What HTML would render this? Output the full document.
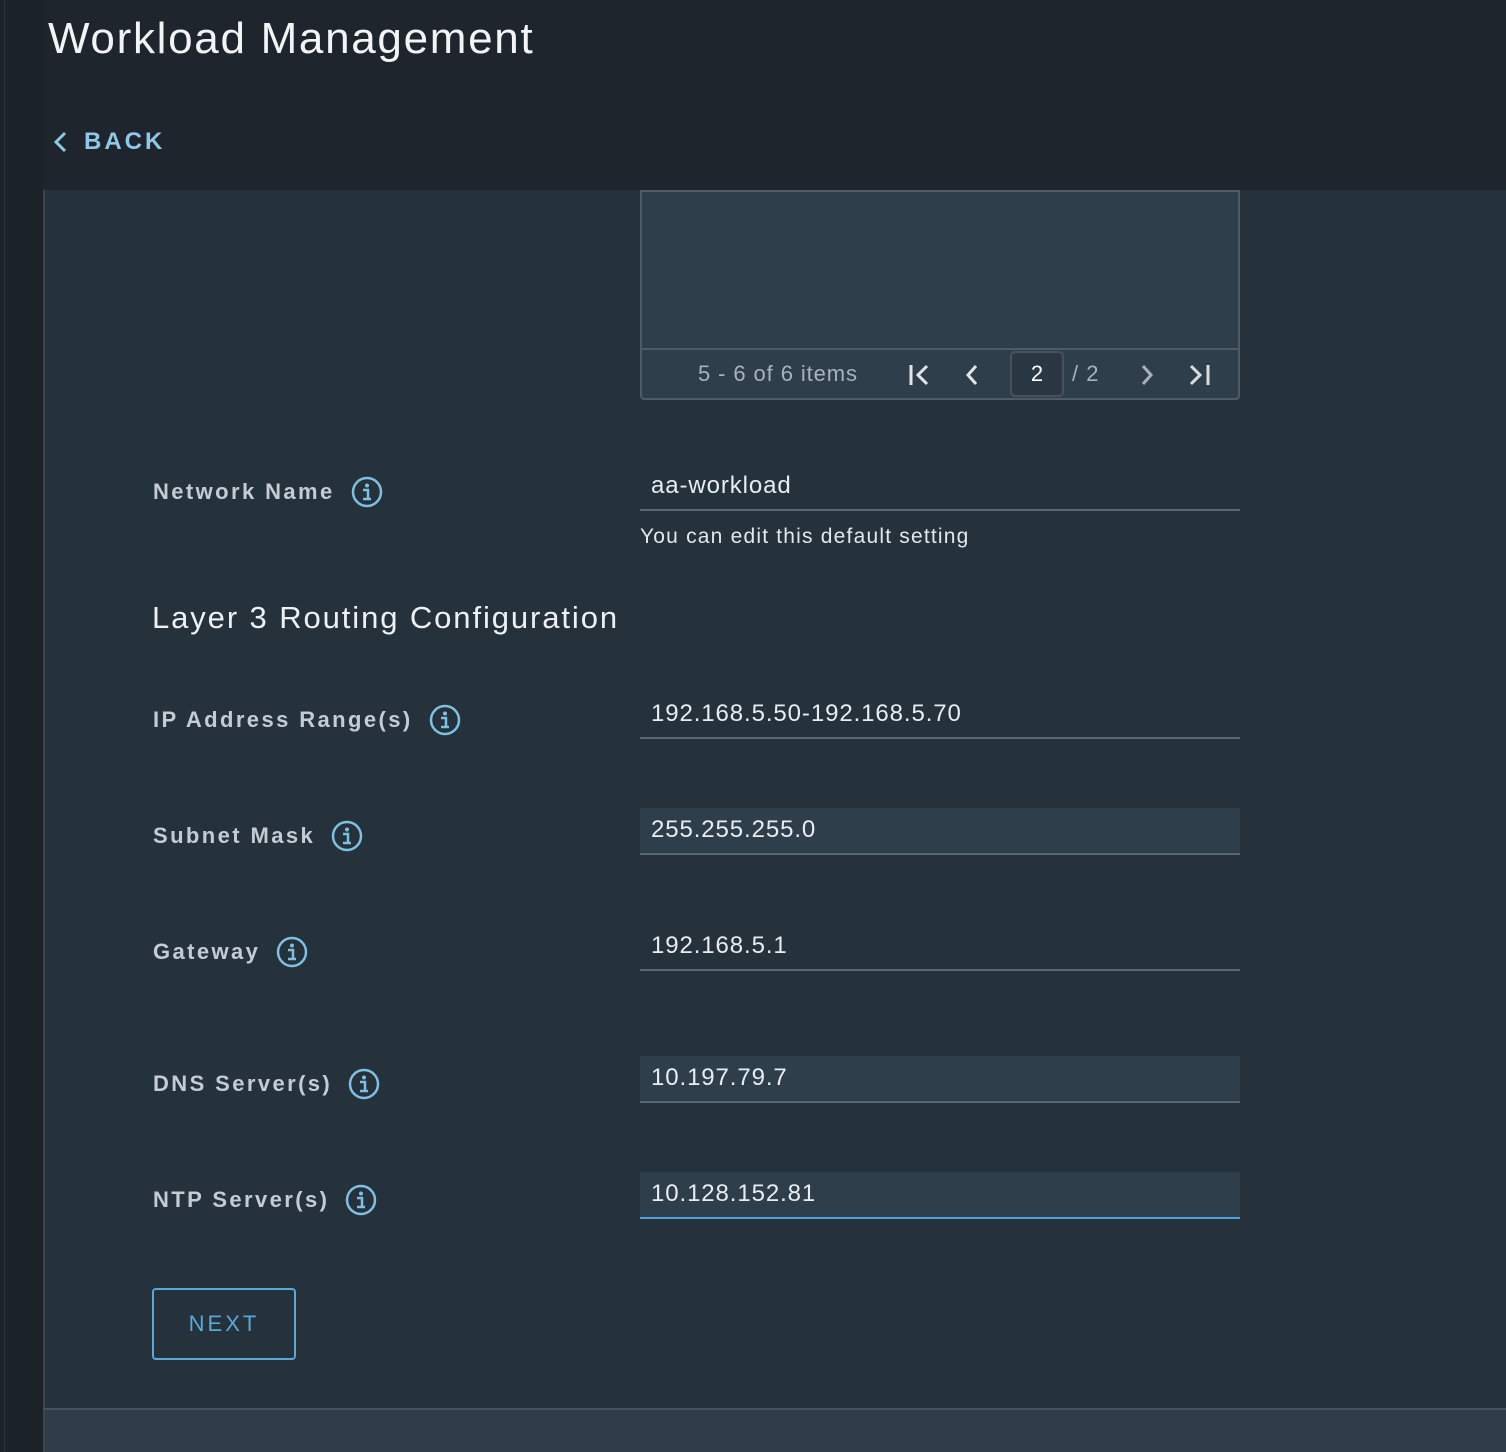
<!DOCTYPE html>
<html><head><meta charset="utf-8"><style>
*{margin:0;padding:0;box-sizing:border-box}
body{width:1506px;height:1452px;background:#1e252d;font-family:"Liberation Sans",sans-serif;position:relative;overflow:hidden}
.a{position:absolute}
.lbl{position:absolute;left:153px;font-size:22px;font-weight:bold;color:#c3ccd5;display:flex;align-items:center;letter-spacing:2.4px}
.ic{width:32px;height:32px;margin-left:16px}
.inp{position:absolute;left:640px;width:600px;height:47px;border-bottom:2px solid #5c6670;color:#e8edf1;font-size:24px;padding:0 0 0 11px;line-height:44px;letter-spacing:0.9px}
.inp.f{background:#2e3e4b}
</style></head><body>
<div class="a" style="left:0;top:0;width:43px;height:1452px;background:#1b2228"></div>
<div class="a" style="left:4px;top:0;width:1px;height:1452px;background:#2b3540"></div>
<div class="a" style="left:48px;top:14px;font-size:44px;color:#f2f4f6;letter-spacing:1.7px">Workload Management</div>
<div class="a" style="left:52px;top:128px;font-size:24px;font-weight:bold;color:#8fc7e6;letter-spacing:3px;display:flex;align-items:center">
<svg width="18" height="26" viewBox="0 0 18 26"><path d="M13 4 L4 13 L13 22" stroke="#8fc7e6" stroke-width="3" fill="none"/></svg>
<span style="margin-left:14px">BACK</span></div>
<div class="a" style="left:43px;top:190px;width:1463px;height:1218px;background:#25313b;border-left:2px solid #3a4550"></div>
<div class="a" style="left:43px;top:1408px;width:1463px;height:44px;background:#2e3d49;border-top:2px solid #46535f;border-left:2px solid #3a4550"></div>
<div class="a" style="left:640px;top:190px;width:600px;height:210px;background:#2f3e4b;border:2px solid #4d5b67;border-radius:0 0 4px 4px"></div>
<div class="a" style="left:640px;top:348px;width:600px;height:2px;background:#4d5b67"></div>
<div class="a" style="left:698px;top:361px;font-size:22px;color:#a8b2bc;letter-spacing:0.9px">5 - 6 of 6 items</div>
<svg class="a" style="left:905px;top:362px" width="30" height="26" viewBox="0 0 30 26"><path d="M6 3V23M22 4L13 13L22 22" stroke="#e0e5ea" stroke-width="3" fill="none"/></svg>
<svg class="a" style="left:960px;top:362px" width="24" height="26" viewBox="0 0 24 26"><path d="M16 4L8 13L16 22" stroke="#e0e5ea" stroke-width="3" fill="none"/></svg>
<div class="a" style="left:1010px;top:351px;width:54px;height:46px;border:2px solid #46535f;border-radius:5px;background:#2a3844;color:#fff;font-size:22px;text-align:center;line-height:42px">2</div>
<div class="a" style="left:1072px;top:361px;font-size:22px;color:#a8b2bc;letter-spacing:1px">/ 2</div>
<svg class="a" style="left:1135px;top:362px" width="24" height="26" viewBox="0 0 24 26"><path d="M8 4L16 13L8 22" stroke="#a8b2bc" stroke-width="3" fill="none"/></svg>
<svg class="a" style="left:1185px;top:362px" width="30" height="26" viewBox="0 0 30 26"><path d="M6 4L15 13L6 22M23 3V23" stroke="#d8dde2" stroke-width="3" fill="none"/></svg>

<div class="lbl" style="top:476px">Network Name<svg class="ic" viewBox="0 0 32 32"><circle cx="16" cy="16" r="14" stroke="#7fc0e2" stroke-width="2.5" fill="none"/><circle cx="16" cy="9.5" r="2" fill="#7fc0e2"/><path d="M12 14h5v9M12 23h8" stroke="#7fc0e2" stroke-width="2.5" fill="none"/></svg></div>
<div class="inp" style="top:464px">aa-workload</div>
<div class="a" style="left:640px;top:525px;font-size:21px;color:#e3e8ec;letter-spacing:1.2px">You can edit this default setting</div>
<div class="a" style="left:152px;top:600px;font-size:31px;color:#eef1f4;letter-spacing:1.9px">Layer 3 Routing Configuration</div>

<div class="lbl" style="top:704px">IP Address Range(s)<svg class="ic" viewBox="0 0 32 32"><circle cx="16" cy="16" r="14" stroke="#7fc0e2" stroke-width="2.5" fill="none"/><circle cx="16" cy="9.5" r="2" fill="#7fc0e2"/><path d="M12 14h5v9M12 23h8" stroke="#7fc0e2" stroke-width="2.5" fill="none"/></svg></div>
<div class="inp" style="top:692px">192.168.5.50-192.168.5.70</div>

<div class="lbl" style="top:820px">Subnet Mask<svg class="ic" viewBox="0 0 32 32"><circle cx="16" cy="16" r="14" stroke="#7fc0e2" stroke-width="2.5" fill="none"/><circle cx="16" cy="9.5" r="2" fill="#7fc0e2"/><path d="M12 14h5v9M12 23h8" stroke="#7fc0e2" stroke-width="2.5" fill="none"/></svg></div>
<div class="inp f" style="top:808px">255.255.255.0</div>

<div class="lbl" style="top:936px">Gateway<svg class="ic" viewBox="0 0 32 32"><circle cx="16" cy="16" r="14" stroke="#7fc0e2" stroke-width="2.5" fill="none"/><circle cx="16" cy="9.5" r="2" fill="#7fc0e2"/><path d="M12 14h5v9M12 23h8" stroke="#7fc0e2" stroke-width="2.5" fill="none"/></svg></div>
<div class="inp" style="top:924px">192.168.5.1</div>

<div class="lbl" style="top:1068px">DNS Server(s)<svg class="ic" viewBox="0 0 32 32"><circle cx="16" cy="16" r="14" stroke="#7fc0e2" stroke-width="2.5" fill="none"/><circle cx="16" cy="9.5" r="2" fill="#7fc0e2"/><path d="M12 14h5v9M12 23h8" stroke="#7fc0e2" stroke-width="2.5" fill="none"/></svg></div>
<div class="inp f" style="top:1056px">10.197.79.7</div>

<div class="lbl" style="top:1184px">NTP Server(s)<svg class="ic" viewBox="0 0 32 32"><circle cx="16" cy="16" r="14" stroke="#7fc0e2" stroke-width="2.5" fill="none"/><circle cx="16" cy="9.5" r="2" fill="#7fc0e2"/><path d="M12 14h5v9M12 23h8" stroke="#7fc0e2" stroke-width="2.5" fill="none"/></svg></div>
<div class="inp f" style="top:1172px;border-bottom-color:#4aa3dc">10.128.152.81</div>

<div class="a" style="left:152px;top:1288px;width:144px;height:72px;border:2px solid #59a8d8;border-radius:4px;color:#59a8d8;font-size:22px;letter-spacing:3px;text-align:center;line-height:68px">NEXT</div>
</body></html>
